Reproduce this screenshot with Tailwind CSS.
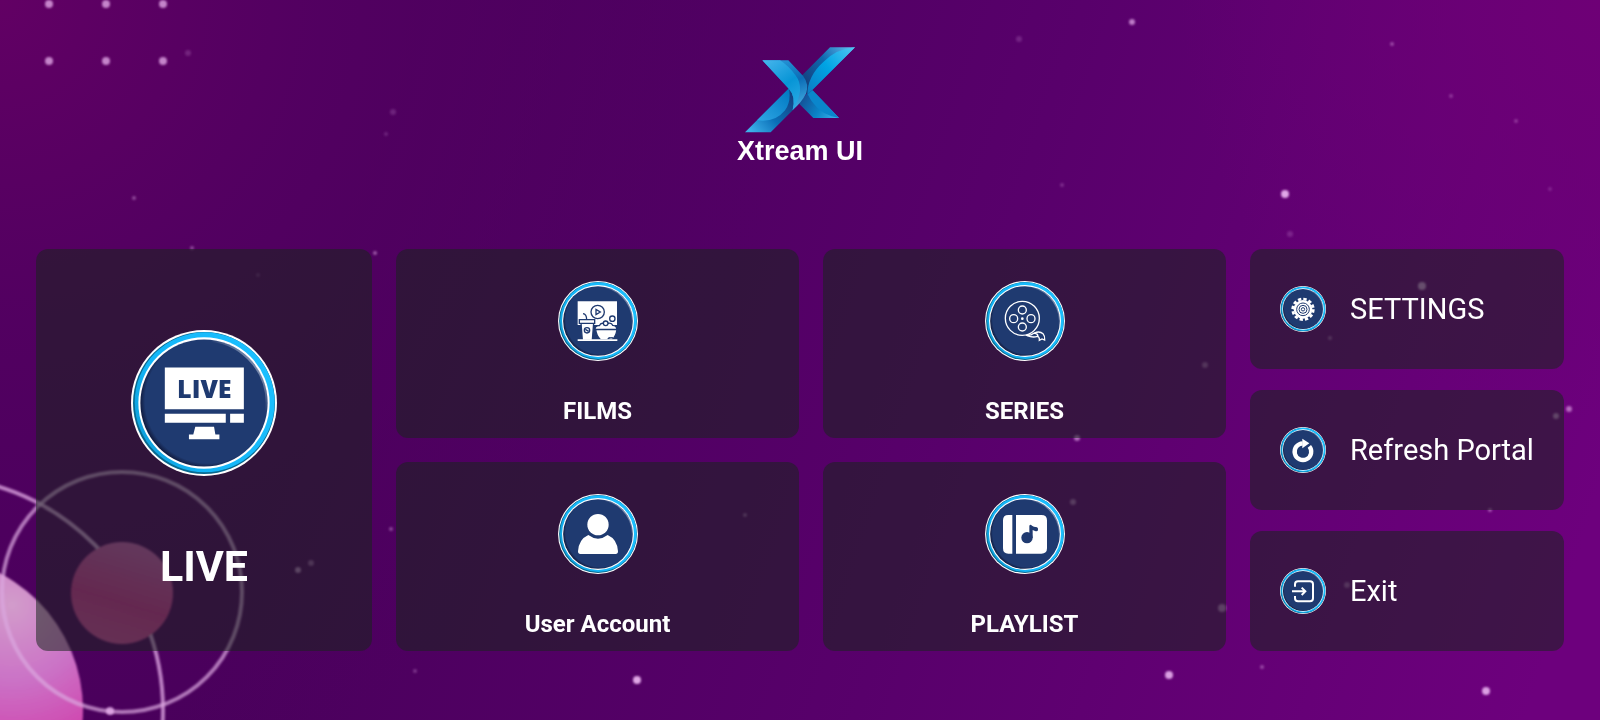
<!DOCTYPE html>
<html lang="en">
<head>
    <meta charset="UTF-8">
    <meta name="viewport" content="width=device-width, initial-scale=1.0">
    <title>Xtream UI</title>
    <script src="https://cdn.jsdelivr.net/npm/@tailwindcss/browser@4"></script>
</head>
<body class="bg-[#50005f] font-['Roboto',sans-serif] text-white">
    <!-- Shared badge ring -->
    <svg class="absolute w-0 h-0" aria-hidden="true">
        <defs>
            <linearGradient id="ringBlue" x1="0" y1="0.7" x2="1" y2="0.2">
                <stop offset="0" stop-color="#0e9fda"/>
                <stop offset="0.25" stop-color="#12b4f6"/>
                <stop offset="1" stop-color="#1cc0ff"/>
            </linearGradient>
            <radialGradient id="discBlue" cx="0.53" cy="0.48" r="0.53">
                <stop offset="0.93" stop-color="#1f3a70"/>
                <stop offset="1" stop-color="#121d42"/>
            </radialGradient>
            <linearGradient id="discGlow" x1="0.5" y1="0.5" x2="0.95" y2="0.15">
                <stop offset="0.6" stop-color="#b9c4d8" stop-opacity="0"/>
                <stop offset="1" stop-color="#b9c4d8" stop-opacity="0.8"/>
            </linearGradient>
            <symbol id="ring" viewBox="0 0 436 436">
                <circle cx="218" cy="218" r="218" fill="#fff"/>
                <circle cx="218" cy="218" r="212" fill="#08698f"/>
                <circle cx="220" cy="216" r="209" fill="url(#ringBlue)"/>
                <circle cx="218" cy="218" r="196" fill="#fff"/>
                <circle cx="218" cy="218" r="190" fill="url(#discBlue)"/>
                <circle cx="218" cy="218" r="187" fill="none" stroke="url(#discGlow)" stroke-width="6"/>
            </symbol>
        </defs>
    </svg>

    <main class="relative min-h-screen overflow-hidden">
        <!-- Backdrop -->
        <svg class="absolute inset-0 w-full h-full" viewBox="0 0 1600 720" preserveAspectRatio="xMidYMid slice" aria-hidden="true">
            <defs>
                <linearGradient id="bg" gradientUnits="userSpaceOnUse" x1="300" y1="350" x2="1520" y2="740">
                    <stop offset="0" stop-color="#49005b"/>
                    <stop offset="0.5" stop-color="#58006b"/>
                    <stop offset="1" stop-color="#6d007d"/>
                </linearGradient>
                <radialGradient id="bgTop" gradientUnits="userSpaceOnUse" cx="0" cy="0" r="800">
                    <stop offset="0" stop-color="#620064"/>
                    <stop offset="0.4" stop-color="#560063" stop-opacity="0.7"/>
                    <stop offset="1" stop-color="#500062" stop-opacity="0"/>
                </radialGradient>
                <radialGradient id="bgCorner" gradientUnits="userSpaceOnUse" cx="1600" cy="0" r="420">
                    <stop offset="0" stop-color="#6e0076"/>
                    <stop offset="1" stop-color="#6a0074" stop-opacity="0"/>
                </radialGradient>
                <radialGradient id="sphere" gradientUnits="userSpaceOnUse" cx="12" cy="605" r="190">
                    <stop offset="0" stop-color="#d29ccb"/>
                    <stop offset="0.4" stop-color="#cb72c6"/>
                    <stop offset="0.75" stop-color="#d045ae"/>
                    <stop offset="1" stop-color="#d2389f"/>
                </radialGradient>
                <linearGradient id="dot" x1="0.7" y1="0" x2="0.4" y2="1">
                    <stop offset="0" stop-color="#b850a8"/>
                    <stop offset="0.6" stop-color="#bc2c8c"/>
                    <stop offset="1" stop-color="#be3c96"/>
                </linearGradient>
                <filter id="soft"><feGaussianBlur stdDeviation="1"/></filter>
            </defs>
            <rect width="1600" height="720" fill="url(#bg)"/>
            <rect width="1600" height="720" fill="url(#bgTop)"/>
            <rect width="1600" height="720" fill="url(#bgCorner)"/>
            <g filter="url(#soft)">
                <circle cx="-71" cy="710" r="154" fill="url(#sphere)"/>
                <circle cx="-71" cy="710" r="234" fill="none" stroke="#e0a8e4" stroke-opacity="0.75" stroke-width="4"/>
                <circle cx="122" cy="592" r="120" fill="none" stroke="#dca8e0" stroke-opacity="0.7" stroke-width="4"/>
                <circle cx="122" cy="593" r="51" fill="url(#dot)"/>
            </g>
            <g id="stars" filter="url(#soft)" fill="#e8b0ee"></g>
        </svg>

        <div class="relative px-9 pt-[47px] pb-9">
            <header class="flex flex-col items-center mb-20">
                <svg class="w-[110px] h-[86px]" viewBox="75 50 330 258" aria-hidden="true">
                    <defs>
                        <linearGradient id="armUp" gradientUnits="userSpaceOnUse" x1="250" y1="170" x2="400" y2="55">
                            <stop offset="0" stop-color="#0b7cc4"/>
                            <stop offset="0.5" stop-color="#00a4e4"/>
                            <stop offset="1" stop-color="#4cc4f2"/>
                        </linearGradient>
                        <linearGradient id="armUpShade" gradientUnits="userSpaceOnUse" x1="250" y1="150" x2="390" y2="55">
                            <stop offset="0" stop-color="#14417f"/>
                            <stop offset="0.5" stop-color="#0e68ae"/>
                            <stop offset="1" stop-color="#5cb4ea"/>
                        </linearGradient>
                        <linearGradient id="armLow" gradientUnits="userSpaceOnUse" x1="90" y1="300" x2="215" y2="190">
                            <stop offset="0" stop-color="#3db1ea"/>
                            <stop offset="0.45" stop-color="#0a6fb8"/>
                            <stop offset="1" stop-color="#163f80"/>
                        </linearGradient>
                        <linearGradient id="armLeft" gradientUnits="userSpaceOnUse" x1="120" y1="265" x2="210" y2="180">
                            <stop offset="0" stop-color="#2ba3e2"/>
                            <stop offset="1" stop-color="#0079c2"/>
                        </linearGradient>
                        <linearGradient id="armRight" gradientUnits="userSpaceOnUse" x1="250" y1="205" x2="350" y2="263">
                            <stop offset="0" stop-color="#14549a"/>
                            <stop offset="0.5" stop-color="#0a84c8"/>
                            <stop offset="1" stop-color="#3db0ea"/>
                        </linearGradient>
                        <linearGradient id="fold" gradientUnits="userSpaceOnUse" x1="135" y1="90" x2="235" y2="230">
                            <stop offset="0" stop-color="#45b4ec"/>
                            <stop offset="0.55" stop-color="#0795d6"/>
                            <stop offset="1" stop-color="#2aaae4"/>
                        </linearGradient>
                        <linearGradient id="foldEdge" gradientUnits="userSpaceOnUse" x1="190" y1="90" x2="240" y2="220">
                            <stop offset="0" stop-color="#2492d4"/>
                            <stop offset="0.5" stop-color="#0b6cb6"/>
                            <stop offset="1" stop-color="#3aa4dc"/>
                        </linearGradient>
                    </defs>
                    <path d="M262 188L278 180L357 263H280L236 219Z" fill="url(#armRight)"/>
                    <path d="M262 190L278 180L357 263L335 258Q285 240 262 190Z" fill="#0a86cc"/>
                    <path d="M330 51H405L262 194L236 145Z" fill="url(#armUpShade)"/>
                    <path d="M405 51Q350 55 310 95Q262 138 262 194Z" fill="url(#armUp)"/>
                    <path d="M207 174L75 306H152L240 218L225 180Z" fill="url(#armLow)"/>
                    <path d="M207 174L111 270Q165 278 195 240Q214 215 207 174Z" fill="url(#armLeft)"/>
                    <path d="M127 90H205L250 138Q268 162 258 190Q246 214 218 239Q228 198 207 176Z" fill="url(#foldEdge)"/>
                    <path d="M127 90H180Q205 106 226 134Q258 175 218 239Q228 198 207 176Z" fill="url(#fold)"/>
                </svg>
                <h1 class="font-['Liberation_Sans',sans-serif] font-bold text-[27px] leading-9">Xtream UI</h1>
            </header>

            <nav class="grid grid-cols-[336fr_403fr_403fr_314fr] gap-6">
                <button class="row-span-2 flex flex-col items-center pt-[81px] rounded-xl bg-[#17251b]/53">
                    <svg class="w-[146px] h-[146px] mb-[66px]" viewBox="64 61 436 436" aria-hidden="true">
                        <use href="#ring" x="64" y="61" width="436" height="436"/>
                        <path fill="#fff" d="M165 173H401V298H165ZM165 311H347V338H165ZM360 311H401V338H360ZM256 350H312L316 373H328V387H237V373H250Z"/>
                        <text x="283" y="264" text-anchor="middle" font-family="Open Sans, sans-serif" font-weight="800" font-size="75" fill="#1f3a70">LIVE</text>
                    </svg>
                    <span class="text-[43px] leading-12 font-bold">LIVE</span>
                </button>

                <button class="flex flex-col items-center pt-8 pb-[11px] rounded-xl bg-[#17251b]/53">
                    <svg class="w-20 h-20 mb-[34px]" viewBox="52 33 240 240" aria-hidden="true">
                        <use href="#ring" x="52" y="33" width="240" height="240"/>
                        <path fill="#fff" d="M111 94H229V165H111Z"/>
                        <g fill="none" stroke="#1f3a70" stroke-width="4">
                            <circle cx="171" cy="126" r="20"/>
                            <path d="M166 118V134L179 126Z"/>
                            <path d="M127 131Q138 132 138 150"/>
                        </g>
                        <g fill="#fff" stroke="#1f3a70" stroke-width="4">
                            <path d="M121 159H159L155 211H125Z"/>
                            <path d="M116 149H162V160H116Z"/>
                            <path d="M163 178Q163 166 176 167Q180 158 188 160Q194 149 203 160Q213 158 216 166Q229 167 228 178Z"/>
                            <circle cx="215" cy="146" r="8"/>
                            <circle cx="195" cy="160" r="7"/>
                            <path d="M165 179H229Q226 200 214 210H180Q167 198 165 179Z"/>
                            <circle cx="139" cy="181" r="8"/>
                        </g>
                        <path d="M134 178L144 184M201 209Q205 201 211 204Q216 200 219 209" fill="none" stroke="#1f3a70" stroke-width="4"/>
                        <path fill="#fff" d="M111 208H230V213H111Z"/>
                    </svg>
                    <span class="text-2xl leading-8 font-bold">FILMS</span>
                </button>

                <button class="flex flex-col items-center pt-8 pb-[11px] rounded-xl bg-[#17251b]/53">
                    <svg class="w-20 h-20 mb-[34px]" viewBox="72 33 240 240" aria-hidden="true">
                        <use href="#ring" x="72" y="33" width="240" height="240"/>
                        <g fill="none" stroke="#fff" stroke-width="4">
                            <circle cx="184" cy="145" r="51"/>
                            <circle cx="184" cy="120" r="12"/>
                            <circle cx="158" cy="146" r="12"/>
                            <circle cx="210" cy="146" r="12"/>
                            <circle cx="184" cy="171" r="12"/>
                            <path d="M194 196Q210 197 220 189Q236 182 246 191Q252 198 251 210L243 207L235 211Q236 200 229 199Q216 204 198 197M220 189Q230 190 231 199"/>
                        </g>
                        <circle cx="184" cy="146" r="4" fill="#fff"/>
                    </svg>
                    <span class="text-2xl leading-8 font-bold">SERIES</span>
                </button>

                <div class="row-span-2 flex flex-col gap-[21px]">
                    <button class="flex-1 flex items-center gap-6 px-[30px] rounded-xl bg-[#17251b]/53">
                        <svg class="w-[46px] h-[46px] shrink-0" viewBox="120 136 138 138" aria-hidden="true">
                            <use href="#ring" x="120" y="136" width="138" height="138"/>
                            <circle cx="189" cy="206" r="28" fill="#fff"/>
                            <circle cx="189" cy="206" r="31" fill="none" stroke="#fff" stroke-width="8" stroke-dasharray="10 6.23"/>
                            <g fill="none" stroke="#1f3a70" stroke-width="3">
                                <circle cx="189" cy="206" r="19"/>
                                <circle cx="189" cy="206" r="12"/>
                                <circle cx="189" cy="206" r="5"/>
                            </g>
                        </svg>
                        <span class="text-[29px] leading-9 whitespace-nowrap">SETTINGS</span>
                    </button>
                    <button class="flex-1 flex items-center gap-6 px-[30px] rounded-xl bg-[#17251b]/53">
                        <svg class="w-[46px] h-[46px] shrink-0" viewBox="120 561 138 138" aria-hidden="true">
                            <use href="#ring" x="120" y="561" width="138" height="138"/>
                            <path d="M208 619A25 25 0 1 1 188 610" fill="none" stroke="#fff" stroke-width="13"/>
                            <path d="M187 596L208 610L187 625Z" fill="#fff"/>
                        </svg>
                        <span class="text-[29px] leading-9 whitespace-nowrap">Refresh Portal</span>
                    </button>
                    <button class="flex-1 flex items-center gap-6 px-[30px] rounded-xl bg-[#17251b]/53">
                        <svg class="w-[46px] h-[46px] shrink-0" viewBox="120 143 138 138" aria-hidden="true">
                            <use href="#ring" x="120" y="143" width="138" height="138"/>
                            <path d="M165 199V192Q165 183 174 183H210Q219 183 219 192V234Q219 243 210 243H174Q165 243 165 234V227M156 213H195M185 202L196 213L185 224" fill="none" stroke="#fff" stroke-width="6"/>
                        </svg>
                        <span class="text-[29px] leading-9 whitespace-nowrap">Exit</span>
                    </button>
                </div>

                <button class="flex flex-col items-center pt-8 pb-[11px] rounded-xl bg-[#17251b]/53">
                    <svg class="w-20 h-20 mb-[34px]" viewBox="171 42 240 240" aria-hidden="true">
                        <use href="#ring" x="171" y="42" width="240" height="240"/>
                        <circle cx="291" cy="134" r="32" fill="#fff"/>
                        <path d="M262 165Q291 187 320 165Q349 178 351 214Q351 222 344 222H238Q231 222 231 214Q233 178 262 165Z" fill="#fff"/>
                    </svg>
                    <span class="text-2xl leading-8 font-bold">User Account</span>
                </button>

                <button class="flex flex-col items-center pt-8 pb-[11px] rounded-xl bg-[#17251b]/53">
                    <svg class="w-20 h-20 mb-[34px]" viewBox="102 42 240 240" aria-hidden="true">
                        <use href="#ring" x="102" y="42" width="240" height="240"/>
                        <path d="M184 105H172Q156 105 156 121V205Q156 221 172 221H184ZM195 105H271Q288 105 288 121V205Q288 221 271 221H195Z" fill="#fff"/>
                        <g fill="#1f3a70">
                            <circle cx="228" cy="173" r="17"/>
                            <path d="M235 137Q238 132 243 137Q247 140 258 142Q262 144 261 150Q260 155 252 153L245 150V174H235Z"/>
                        </g>
                    </svg>
                    <span class="text-2xl leading-8 font-bold">PLAYLIST</span>
                </button>
            </nav>
        </div>
    </main>

    <script>
        // x, y, radius, opacity
        const stars = [
            [49, 4, 4, 0.75], [106, 4, 4, 0.75], [163, 4, 4, 0.75],
            [49, 61, 4, 0.75], [106, 61, 4, 0.75], [163, 61, 4, 0.75],
            [1132, 22, 3, 0.7], [1285, 194, 4, 0.95], [637, 680, 4, 0.95],
            [1169, 675, 4, 0.9], [1486, 691, 4, 0.9], [1422, 286, 4, 0.7],
            [1077, 438, 3, 0.6], [1205, 365, 3, 0.4], [1073, 502, 3, 0.5],
            [745, 515, 2, 0.4], [1222, 608, 4, 0.55], [1569, 409, 3, 0.6],
            [1556, 416, 3, 0.6], [1347, 585, 3, 0.4], [1262, 667, 2, 0.4],
            [1490, 510, 2, 0.5], [298, 570, 3, 0.6], [311, 563, 3, 0.4],
            [391, 529, 2, 0.4], [375, 253, 2, 0.5], [192, 248, 2, 0.4],
            [134, 198, 2, 0.4], [393, 112, 3, 0.2], [386, 134, 2, 0.2],
            [110, 711, 4, 0.8], [188, 53, 3, 0.2], [415, 671, 2, 0.3],
            [1019, 39, 3, 0.2], [1392, 44, 2, 0.4], [1451, 96, 2, 0.3],
            [1516, 121, 2, 0.3], [1062, 185, 2, 0.25], [1290, 234, 3, 0.2],
            [1550, 189, 2, 0.2], [1330, 338, 2, 0.4], [258, 275, 2, 0.2]
        ];
        const layer = document.getElementById('stars');

        stars.forEach(([x, y, r, opacity]) => {
            const star = document.createElementNS('http://www.w3.org/2000/svg', 'circle');
            star.setAttribute('cx', x);
            star.setAttribute('cy', y);
            star.setAttribute('r', r);
            star.setAttribute('opacity', opacity);
            layer.appendChild(star);
        });
    </script>
</body>
</html>
